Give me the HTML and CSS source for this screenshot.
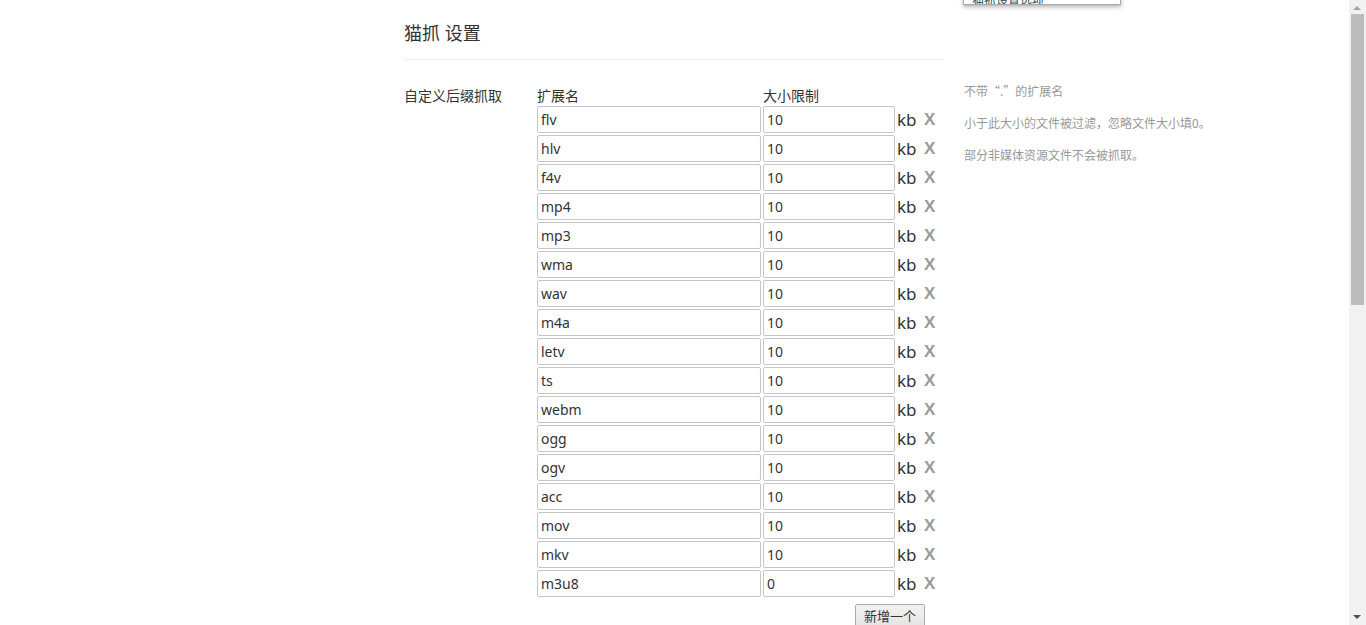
FILE: index.html
```html
<!DOCTYPE html>
<html lang="zh-CN">
<head>
<meta charset="utf-8">
<title>猫抓 设置</title>
<link rel="stylesheet" href="styles.css">
</head>
<body>
<div class="page">
  <div class="wrap">
    <h1 class="title">猫抓 设置</h1>
    <div class="rule"></div>
    <div class="setting">
      <div class="label">自定义后缀抓取</div>
      <div class="fields">
        <div class="heads"><span class="h-ext">扩展名</span><span class="h-size">大小限制</span></div>
        <div class="row"><input class="ext" value="flv"><input class="size" value="10"><span class="unit">kb</span><span class="del">X</span></div>
        <div class="row"><input class="ext" value="hlv"><input class="size" value="10"><span class="unit">kb</span><span class="del">X</span></div>
        <div class="row"><input class="ext" value="f4v"><input class="size" value="10"><span class="unit">kb</span><span class="del">X</span></div>
        <div class="row"><input class="ext" value="mp4"><input class="size" value="10"><span class="unit">kb</span><span class="del">X</span></div>
        <div class="row"><input class="ext" value="mp3"><input class="size" value="10"><span class="unit">kb</span><span class="del">X</span></div>
        <div class="row"><input class="ext" value="wma"><input class="size" value="10"><span class="unit">kb</span><span class="del">X</span></div>
        <div class="row"><input class="ext" value="wav"><input class="size" value="10"><span class="unit">kb</span><span class="del">X</span></div>
        <div class="row"><input class="ext" value="m4a"><input class="size" value="10"><span class="unit">kb</span><span class="del">X</span></div>
        <div class="row"><input class="ext" value="letv"><input class="size" value="10"><span class="unit">kb</span><span class="del">X</span></div>
        <div class="row"><input class="ext" value="ts"><input class="size" value="10"><span class="unit">kb</span><span class="del">X</span></div>
        <div class="row"><input class="ext" value="webm"><input class="size" value="10"><span class="unit">kb</span><span class="del">X</span></div>
        <div class="row"><input class="ext" value="ogg"><input class="size" value="10"><span class="unit">kb</span><span class="del">X</span></div>
        <div class="row"><input class="ext" value="ogv"><input class="size" value="10"><span class="unit">kb</span><span class="del">X</span></div>
        <div class="row"><input class="ext" value="acc"><input class="size" value="10"><span class="unit">kb</span><span class="del">X</span></div>
        <div class="row"><input class="ext" value="mov"><input class="size" value="10"><span class="unit">kb</span><span class="del">X</span></div>
        <div class="row"><input class="ext" value="mkv"><input class="size" value="10"><span class="unit">kb</span><span class="del">X</span></div>
        <div class="row"><input class="ext" value="m3u8"><input class="size" value="0"><span class="unit">kb</span><span class="del">X</span></div>
        <div class="actions"><button class="add">新增一个</button></div>
      </div>
      <div class="hints">
        <p>不带“.”的扩展名</p>
        <p>小于此大小的文件被过滤，忽略文件大小填0。</p>
        <p>部分非媒体资源文件不会被抓取。</p>
      </div>
    </div>
  </div>
</div>
<div class="popup"><span>猫抓设置选项</span></div>
<div class="scrollbar">
  <div class="arrow up"></div>
  <div class="thumb"></div>
  <div class="arrow down"></div>
</div>
</body>
</html>
```

FILE: styles.css
```css
html, body {
  margin: 0;
  padding: 0;
  height: 100%;
  overflow: hidden;
  background: #fff;
}
body {
  font-family: "Noto Sans", "Noto Sans CJK SC", sans-serif;
  color: #333;
}
.page {
  margin-right: 17px;
}
.wrap {
  width: 541px;
  margin: 0 auto;
}
.title {
  margin: 0;
  padding-top: 21px;
  font-size: 18px;
  font-weight: normal;
  line-height: 24px;
  color: #333;
}
.rule {
  margin-top: 14px;
  margin-right: 1px;
  border-top: 1px solid #eee;
}
.setting {
  display: grid;
  grid-template-columns: 133px 407px 300px;
  margin-top: 25px;
}
.label {
  font-size: 14px;
  line-height: 21px;
  color: #333;
}
.heads {
  display: flex;
  font-size: 14px;
  line-height: 21px;
  height: 21px;
}
.h-ext {
  width: 226px;
}
.row {
  display: flex;
  align-items: center;
  height: 27px;
  margin-bottom: 2px;
}
.row input {
  box-sizing: border-box;
  height: 27px;
  margin: 0 2px 0 0;
  padding: 0 3px;
  border: 1px solid #c6c6c6;
  border-radius: 2px;
  font-family: "Noto Sans", "Noto Sans CJK SC", sans-serif;
  font-size: 14px;
  color: #333;
  background: #fff;
  outline: none;
}
.ext { width: 224px; }
.size { width: 132px; }
.unit {
  font-size: 17px;
  line-height: 27px;
  color: #333;
  width: 27px;
}
.del {
  font-family: "Liberation Sans", Arial, sans-serif;
  font-weight: bold;
  font-size: 17px;
  color: #9a9a9a;
}
.actions {
  padding-left: 318px;
  padding-top: 5px;
}
.add {
  box-sizing: border-box;
  width: 70px;
  height: 24px;
  padding: 0;
  border: 1px solid #acacac;
  border-radius: 2px;
  background: linear-gradient(#f2f2f2, #e4e4e4);
  font-family: "Noto Sans CJK SC", sans-serif;
  font-size: 13px;
  color: #333;
  line-height: 22px;
}
.hints {
  padding-left: 20px;
  margin-top: -4px;
}
.hints p {
  margin: 0 0 12px;
  font-size: 12px;
  line-height: 20px;
  color: #999;
  font-family: "Noto Sans CJK SC", sans-serif;
}
.popup {
  position: absolute;
  left: 963px;
  top: -20px;
  width: 156px;
  height: 23px;
  border: 1px solid #aaa;
  background: #fff;
  box-shadow: 0 2px 4px rgba(0,0,0,0.3);
  font-size: 12px;
  line-height: 20px;
  color: #2b4b55;
  overflow: hidden;
}
.popup span {
  display: block;
  padding-left: 8px;
  margin-top: 10px;
}
.scrollbar {
  position: fixed;
  top: 0;
  right: 0;
  width: 17px;
  height: 100%;
  background: #f1f1f1;
}
.thumb {
  position: absolute;
  left: 2px;
  top: 14px;
  width: 13px;
  height: 291px;
  background: #bcbcbc;
}
.arrow {
  position: absolute;
  left: 4px;
  width: 0;
  height: 0;
  border-left: 4px solid transparent;
  border-right: 4px solid transparent;
}
.arrow.up {
  top: 6px;
  border-bottom: 4px solid #a3a3a3;
}
.arrow.down {
  bottom: 6px;
  border-top: 4px solid #505050;
}
```
